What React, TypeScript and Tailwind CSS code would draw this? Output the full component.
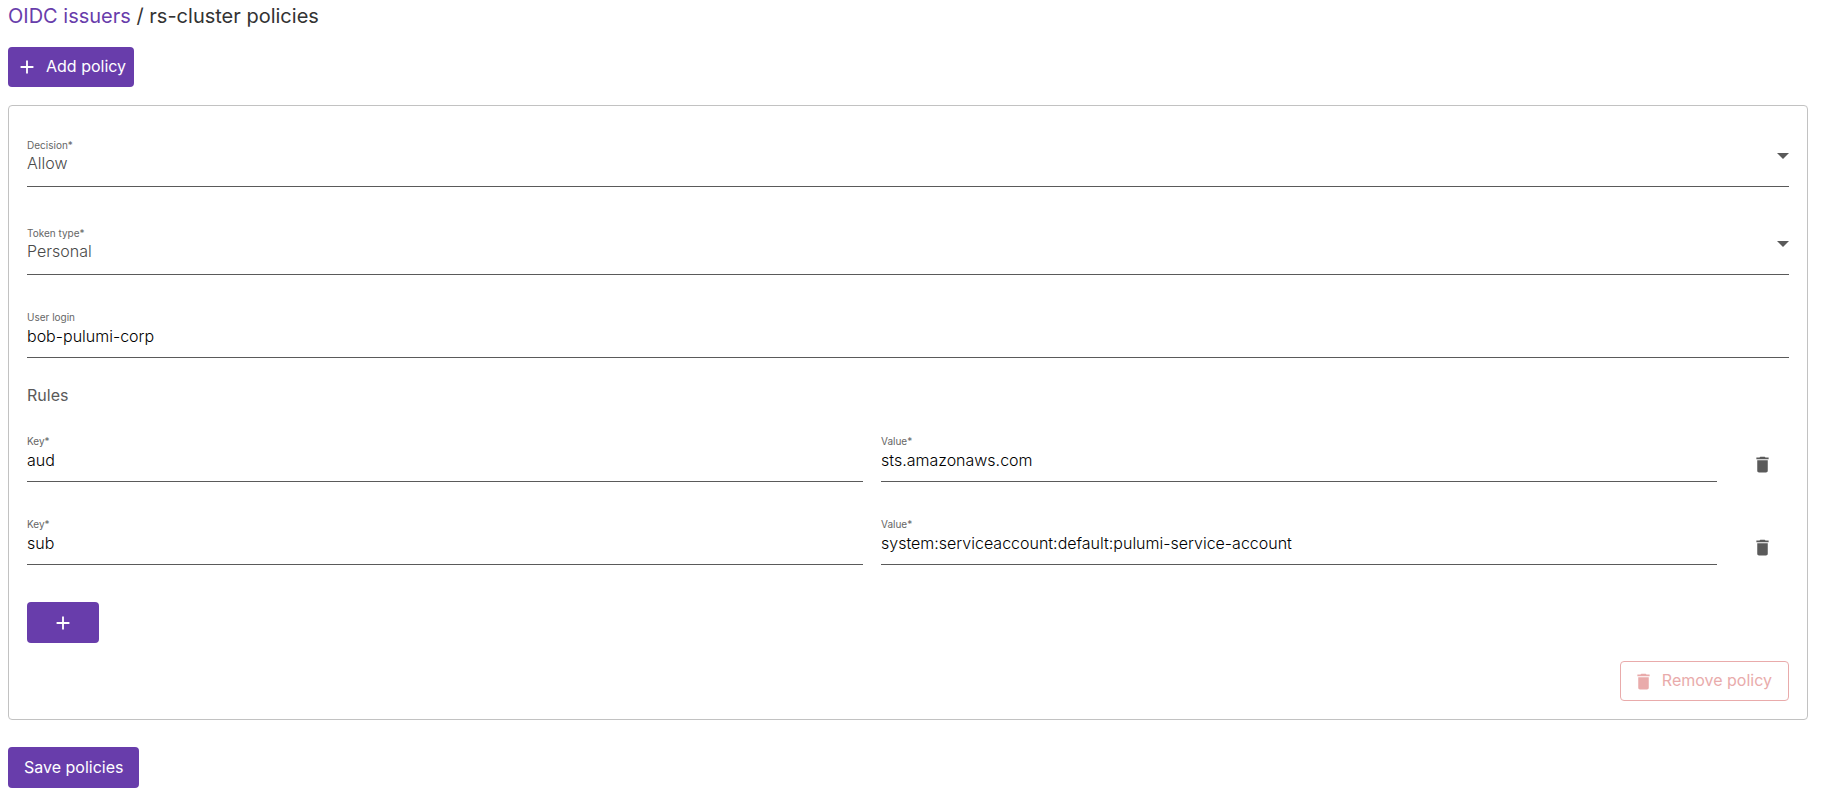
import React, { useState } from "react";
import { MdAdd, MdDelete } from "react-icons/md";

type Rule = {
  id: number;
  key: string;
  value: string;
};

type TextFieldProps = {
  id: string;
  label: string;
  value: string;
  onChange: (value: string) => void;
};

type SelectFieldProps = TextFieldProps & {
  options: string[];
};

const SelectField: React.FC<SelectFieldProps> = ({
  id,
  label,
  value,
  options,
  onChange,
}) => {
  return (
    <div className="relative flex flex-col pt-[15px] border-b border-[#5a5a5a] text-[#666]">
      <label className="text-[10px] leading-3" htmlFor={id}>
        {label}
      </label>
      <select
        id={id}
        className="w-full h-6 mb-[11px] appearance-none bg-transparent text-base font-light text-[#4a4a4a] outline-none"
        value={value}
        onChange={(e) => onChange(e.target.value)}
      >
        {options.map((option) => (
          <option key={option}>{option}</option>
        ))}
      </select>
      <svg
        className="absolute right-0 top-[29px] w-3 h-1.5 pointer-events-none"
        viewBox="0 0 12 6"
        fill="#5a5a5a"
      >
        <path d="M0 0h12L6 6z" />
      </svg>
    </div>
  );
};

const TextField: React.FC<TextFieldProps> = ({
  id,
  label,
  value,
  onChange,
}) => {
  return (
    <div className="flex-1 flex flex-col gap-px pt-[11px] border-b border-[#5a5a5a]">
      <label className="text-[10px] leading-3 text-[#666]" htmlFor={id}>
        {label}
      </label>
      <input
        id={id}
        type="text"
        className="w-full h-6 mb-[9px] bg-transparent text-base font-light text-black outline-none"
        value={value}
        onChange={(e) => onChange(e.target.value)}
      />
    </div>
  );
};

const App = () => {
  const [decision, setDecision] = useState("Allow");
  const [tokenType, setTokenType] = useState("Personal");
  const [login, setLogin] = useState("bob-pulumi-corp");
  const [rules, setRules] = useState<Rule[]>([
    { id: 1, key: "aud", value: "sts.amazonaws.com" },
    {
      id: 2,
      key: "sub",
      value: "system:serviceaccount:default:pulumi-service-account",
    },
  ]);

  const updateRule = (id: number, change: Partial<Rule>) => {
    setRules(rules.map((r) => (r.id === id ? { ...r, ...change } : r)));
  };
  const addRule = () => {
    setRules([...rules, { id: Date.now(), key: "", value: "" }]);
  };

  return (
    <main className="pl-2 pr-[17px] pb-2 bg-white font-['Inter',sans-serif] text-base">
      <h1 className="pt-0.5 text-xl leading-7 text-[#333]">
        <a className="text-[#683dab]" href="#issuers">
          OIDC issuers
        </a>{" "}
        / rs-cluster policies
      </h1>
      <button className="mt-[17px] h-10 px-2 flex items-center gap-2 rounded bg-[#683dab] text-white">
        <MdAdd size={22} />
        <span className="pb-0.5">Add policy</span>
      </button>

      <section className="mt-[18px] p-[18px] border border-[#c2c2c2] rounded">
        <div className="flex flex-col gap-[25px]">
          <SelectField
            id="decision"
            label="Decision*"
            value={decision}
            options={["Allow", "Deny"]}
            onChange={setDecision}
          />
          <SelectField
            id="token-type"
            label="Token type*"
            value={tokenType}
            options={["Personal", "Team", "Organization"]}
            onChange={setTokenType}
          />
          <TextField
            id="login"
            label="User login"
            value={login}
            onChange={setLogin}
          />
        </div>

        <h2 className="mt-[25px] mb-[17px] leading-6 text-[#5a5a5a]">Rules</h2>
        <div className="flex flex-col gap-[25px]">
          {rules.map((rule) => (
            <div className="flex items-end gap-[18px]" key={rule.id}>
              <TextField
                id={`key-${rule.id}`}
                label="Key*"
                value={rule.key}
                onChange={(key) => updateRule(rule.id, { key })}
              />
              <TextField
                id={`value-${rule.id}`}
                label="Value*"
                value={rule.value}
                onChange={(value) => updateRule(rule.id, { value })}
              />
              <button
                className="w-[54px] h-9 flex items-center justify-center text-[#5a5a5a]"
                aria-label="Delete rule"
                onClick={() => setRules(rules.filter((r) => r.id !== rule.id))}
              >
                <MdDelete size={21} />
              </button>
            </div>
          ))}
        </div>

        <button
          className="mt-[37px] w-[72px] h-[41px] flex items-center justify-center rounded bg-[#683dab] text-white"
          aria-label="Add rule"
          onClick={addRule}
        >
          <MdAdd size={22} />
        </button>
        <div className="mt-[18px] flex justify-end">
          <button className="h-10 pl-3 pr-4 flex items-center gap-2 border border-[#e9abab] rounded text-[#e9abab]">
            <MdDelete size={21} />
            <span className="pb-0.5">Remove policy</span>
          </button>
        </div>
      </section>

      <button className="mt-[27px] h-[41px] px-4 pb-0.5 rounded bg-[#683dab] text-white">
        Save policies
      </button>
    </main>
  );
};

export default App;
